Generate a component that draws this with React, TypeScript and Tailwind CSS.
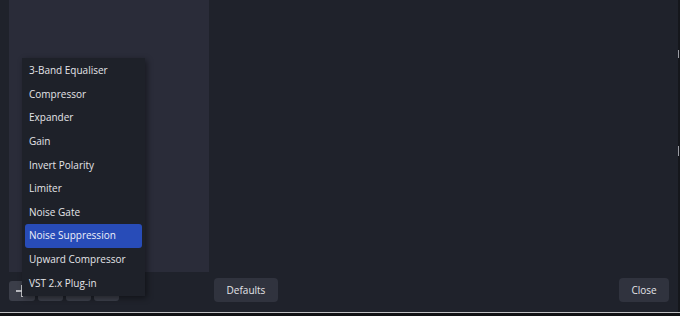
const filters = [
  "3-Band Equaliser",
  "Compressor",
  "Expander",
  "Gain",
  "Invert Polarity",
  "Limiter",
  "Noise Gate",
  "Noise Suppression",
  "Upward Compressor",
  "VST 2.x Plug-in",
];

export default function App() {
  const active = "Noise Suppression";

  return (
    <div
      className="relative w-[680px] h-[316px] overflow-hidden bg-[#1f222b] text-[#e4e4e8]"
      style={{ fontFamily: '"Open Sans", "Noto Sans", sans-serif' }}
    >
      <div className="flex h-[312px]">
        <div className="flex flex-col w-[209px] pl-[9px]">
          <div className="h-[272px] bg-[#2a2c39]" />
          <div className="flex gap-[3px] mt-[9px]">
            <div className="w-[26px] h-[20px] rounded-[3px] bg-[#3b3e49] flex items-center justify-center">
              <svg width="14" height="14" viewBox="0 0 14 14">
                <path d="M7 1v12M1 7h12" stroke="#e4e4e8" strokeWidth="1.6" />
              </svg>
            </div>
            <div className="w-[25px] h-[20px] rounded-[3px] bg-[#3b3e49]" />
            <div className="w-[25px] h-[20px] rounded-[3px] bg-[#3b3e49]" />
            <div className="w-[25px] h-[20px] rounded-[3px] bg-[#3b3e49]" />
          </div>
        </div>

        <div className="flex-1 flex flex-col justify-end pb-[10px] pl-[5px] pr-[9px]">
          <div className="flex items-center justify-between">
            <button className="h-[24px] w-[64px] rounded-[4px] bg-[#30333e] text-[10px] text-[#e4e4e8]">
              Defaults
            </button>
            <button className="h-[24px] w-[50px] rounded-[4px] bg-[#30333e] text-[10px] text-[#e4e4e8]">
              Close
            </button>
          </div>
        </div>

        <div className="w-[2px] bg-[#15171c] flex flex-col">
          <div className="h-[50px]" />
          <div className="h-[8px] w-[1px] bg-[#9a9ca3]" />
          <div className="h-[88px]" />
          <div className="h-[10px] w-[1px] bg-[#9a9ca3]" />
        </div>
      </div>
      <div className="h-[1px] bg-[#bfc0c3]" />
      <div className="h-[3px] bg-[#101114]" />

      {/* context menu */}
      <div className="absolute left-[22px] top-[58px] w-[123px] py-[1px] px-[3px] bg-[#1e2129] shadow-[2px_2px_6px_rgba(0,0,0,0.45)]">
        {filters.map((f) => (
          <div
            key={f}
            className={
              "h-[23.6px] flex items-center pl-[4px] rounded-[3px] text-[10px] whitespace-nowrap " +
              (f === active ? "bg-[#284cb8] text-[#eef0f8]" : "text-[#e4e4e8]")
            }
          >
            {f}
          </div>
        ))}
      </div>
    </div>
  );
}
